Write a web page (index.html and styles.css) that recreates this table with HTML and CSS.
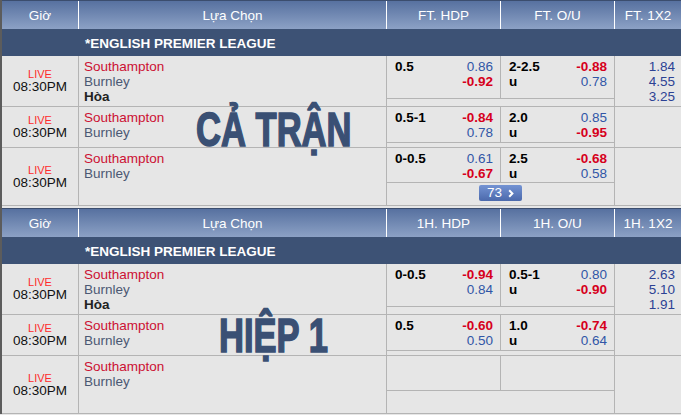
FILE: index.html
```html
<!DOCTYPE html>
<html lang="vi">
<head>
<meta charset="utf-8">
<title>Odds</title>
<link rel="stylesheet" href="styles.css">
</head>
<body>
<div class="board">
  <section class="market">
    <div class="head">
      <div class="hc">Giờ</div>
      <div class="hc">Lựa Chọn</div>
      <div class="hc">FT. HDP</div>
      <div class="hc">FT. O/U</div>
      <div class="hc last">FT. 1X2</div>
    </div>
    <div class="league">*ENGLISH PREMIER LEAGUE</div>

    <div class="match r1">
      <div class="time"><span class="live">LIVE</span><span class="clock">08:30PM</span></div>
      <div class="teams"><span class="home">Southampton</span><span class="away">Burnley</span><span class="draw">Hòa</span></div>
      <div class="odds"><div class="line"><b>0.5</b></div><div class="prices"><span class="pos">0.86</span><span class="neg">-0.92</span></div></div>
      <div class="odds"><div class="line"><b>2-2.5</b><b>u</b></div><div class="prices"><span class="neg">-0.88</span><span class="pos">0.78</span></div></div>
      <div class="x12"><span>1.84</span><span>4.55</span><span>3.25</span></div>
      <div class="extra"></div>
    </div>

    <div class="match r2">
      <div class="time"><span class="live">LIVE</span><span class="clock">08:30PM</span></div>
      <div class="teams"><span class="home">Southampton</span><span class="away">Burnley</span></div>
      <div class="odds"><div class="line"><b>0.5-1</b></div><div class="prices"><span class="neg">-0.84</span><span class="pos">0.78</span></div></div>
      <div class="odds"><div class="line"><b>2.0</b><b>u</b></div><div class="prices"><span class="pos">0.85</span><span class="neg">-0.95</span></div></div>
      <div class="x12"></div>
      <div class="extra"></div>
    </div>

    <div class="match r3">
      <div class="time"><span class="live">LIVE</span><span class="clock">08:30PM</span></div>
      <div class="teams"><span class="home">Southampton</span><span class="away">Burnley</span></div>
      <div class="odds"><div class="line"><b>0-0.5</b></div><div class="prices"><span class="pos">0.61</span><span class="neg">-0.67</span></div></div>
      <div class="odds"><div class="line"><b>2.5</b><b>u</b></div><div class="prices"><span class="neg">-0.68</span><span class="pos">0.58</span></div></div>
      <div class="x12"></div>
      <div class="extra"><span class="more">73<svg class="chev" width="6" height="9" viewBox="0 0 6 9"><path d="M1.2 1.2 L4.4 4.5 L1.2 7.8" fill="none" stroke="#fff" stroke-width="2"/></svg></span></div>
    </div>

    <div class="stamp">CẢ TRẬN</div>
  </section>

  <section class="market">
    <div class="head">
      <div class="hc">Giờ</div>
      <div class="hc">Lựa Chọn</div>
      <div class="hc">1H. HDP</div>
      <div class="hc">1H. O/U</div>
      <div class="hc last">1H. 1X2</div>
    </div>
    <div class="league">*ENGLISH PREMIER LEAGUE</div>

    <div class="match r1">
      <div class="time"><span class="live">LIVE</span><span class="clock">08:30PM</span></div>
      <div class="teams"><span class="home">Southampton</span><span class="away">Burnley</span><span class="draw">Hòa</span></div>
      <div class="odds"><div class="line"><b>0-0.5</b></div><div class="prices"><span class="neg">-0.94</span><span class="pos">0.84</span></div></div>
      <div class="odds"><div class="line"><b>0.5-1</b><b>u</b></div><div class="prices"><span class="pos">0.80</span><span class="neg">-0.90</span></div></div>
      <div class="x12"><span>2.63</span><span>5.10</span><span>1.91</span></div>
      <div class="extra"></div>
    </div>

    <div class="match r2">
      <div class="time"><span class="live">LIVE</span><span class="clock">08:30PM</span></div>
      <div class="teams"><span class="home">Southampton</span><span class="away">Burnley</span></div>
      <div class="odds"><div class="line"><b>0.5</b></div><div class="prices"><span class="neg">-0.60</span><span class="pos">0.50</span></div></div>
      <div class="odds"><div class="line"><b>1.0</b><b>u</b></div><div class="prices"><span class="neg">-0.74</span><span class="pos">0.64</span></div></div>
      <div class="x12"></div>
      <div class="extra"></div>
    </div>

    <div class="match r3">
      <div class="time"><span class="live">LIVE</span><span class="clock">08:30PM</span></div>
      <div class="teams"><span class="home">Southampton</span><span class="away">Burnley</span></div>
      <div class="odds"></div>
      <div class="odds"></div>
      <div class="x12"></div>
      <div class="extra"></div>
    </div>

    <div class="stamp">HIỆP 1</div>
  </section>
</div>
</body>
</html>
```
FILE: styles.css
```css
* { box-sizing: border-box; }

html, body {
  margin: 0;
  padding: 0;
  background: #e6e6e6;
}

body {
  font-family: "Liberation Sans", Arial, sans-serif;
  font-size: 13.5px;
  color: #111;
  overflow: hidden;
  width: 681px;
  height: 415px;
}

.board {
  display: flex;
  flex-direction: column;
  gap: 2px;
  width: 681px;
  border-left: 2px solid #5c5c5c;
  background: #e6e6e6;
}

.market {
  position: relative;
}

.head {
  display: grid;
  grid-template-columns: 77px 308px 114px 114px 1fr;
  height: 29px;
  border-top: 1px solid #3b4d6e;
  background: linear-gradient(#5771a0, #8ca1c5);
}

.hc {
  display: flex;
  align-items: center;
  justify-content: center;
  color: #fff;
  border-right: 1px solid #fff;
  padding-top: 1px;
}

.hc.last { border-right: none; }

.league {
  height: 27px;
  background: #3d5275;
  color: #fff;
  font-weight: bold;
  display: flex;
  align-items: center;
  padding-left: 83px;
  padding-top: 1px;
}

.match {
  display: grid;
  grid-template-columns: 77px 308px 114px 114px 1fr;
  border-bottom: 1px solid #b4b4b4;
}

.r1 { grid-template-rows: 43px 7px; }
.r2 { grid-template-rows: 36px 4px; }
.r3 { grid-template-rows: 35px 22px; }

.time {
  grid-column: 1;
  grid-row: 1 / 3;
  border-right: 1px solid #b4b4b4;
  display: flex;
  flex-direction: column;
  align-items: center;
  justify-content: center;
  padding-bottom: 1px;
}

.live {
  color: #ff2a2a;
  font-size: 11px;
  line-height: 12px;
}

.clock {
  color: #111;
  line-height: 13px;
}

.teams {
  grid-column: 2;
  grid-row: 1 / 3;
  border-right: 1px solid #b4b4b4;
  display: flex;
  flex-direction: column;
  padding: 3px 0 0 5px;
  line-height: 15px;
}

.home { color: #cc1133; }
.away { color: #4b5873; }
.draw { color: #222; font-weight: bold; }

.odds {
  grid-row: 1;
  border-right: 1px solid #b4b4b4;
  border-bottom: 1px solid #b4b4b4;
  display: flex;
  justify-content: space-between;
  padding: 3px 7px 0 8px;
  line-height: 15px;
}

.line, .prices {
  display: flex;
  flex-direction: column;
}

.line b { color: #000; }

.prices { align-items: flex-end; }

.pos { color: #3156a6; }
.neg { color: #d6001c; font-weight: bold; }

.x12 {
  grid-column: 5;
  grid-row: 1 / 3;
  display: flex;
  flex-direction: column;
  align-items: flex-end;
  padding: 3px 6px 0 0;
  line-height: 15px;
  color: #2c4294;
}

.extra {
  grid-column: 3 / 5;
  grid-row: 2;
  border-right: 1px solid #b4b4b4;
  display: flex;
  justify-content: center;
  align-items: flex-start;
  padding-top: 2px;
}

.more {
  display: flex;
  align-items: center;
  gap: 6px;
  height: 16px;
  padding: 0 8px;
  border-radius: 2px;
  background: linear-gradient(#7393d3, #4b69ab);
  color: #fff;
  line-height: 16px;
}

.chev { display: block; }

.stamp {
  position: absolute;
  left: 194px;
  top: 106px;
  font-family: "Liberation Sans", Arial, sans-serif;
  font-weight: bold;
  font-size: 48px;
  line-height: 48px;
  color: #3a5074;
  -webkit-text-stroke: 1.6px #3a5074;
  white-space: nowrap;
  transform: scaleX(0.72);
  transform-origin: 0 0;
  pointer-events: none;
}

.market + .market .stamp {
  left: 217px;
  top: 104px;
}
```
